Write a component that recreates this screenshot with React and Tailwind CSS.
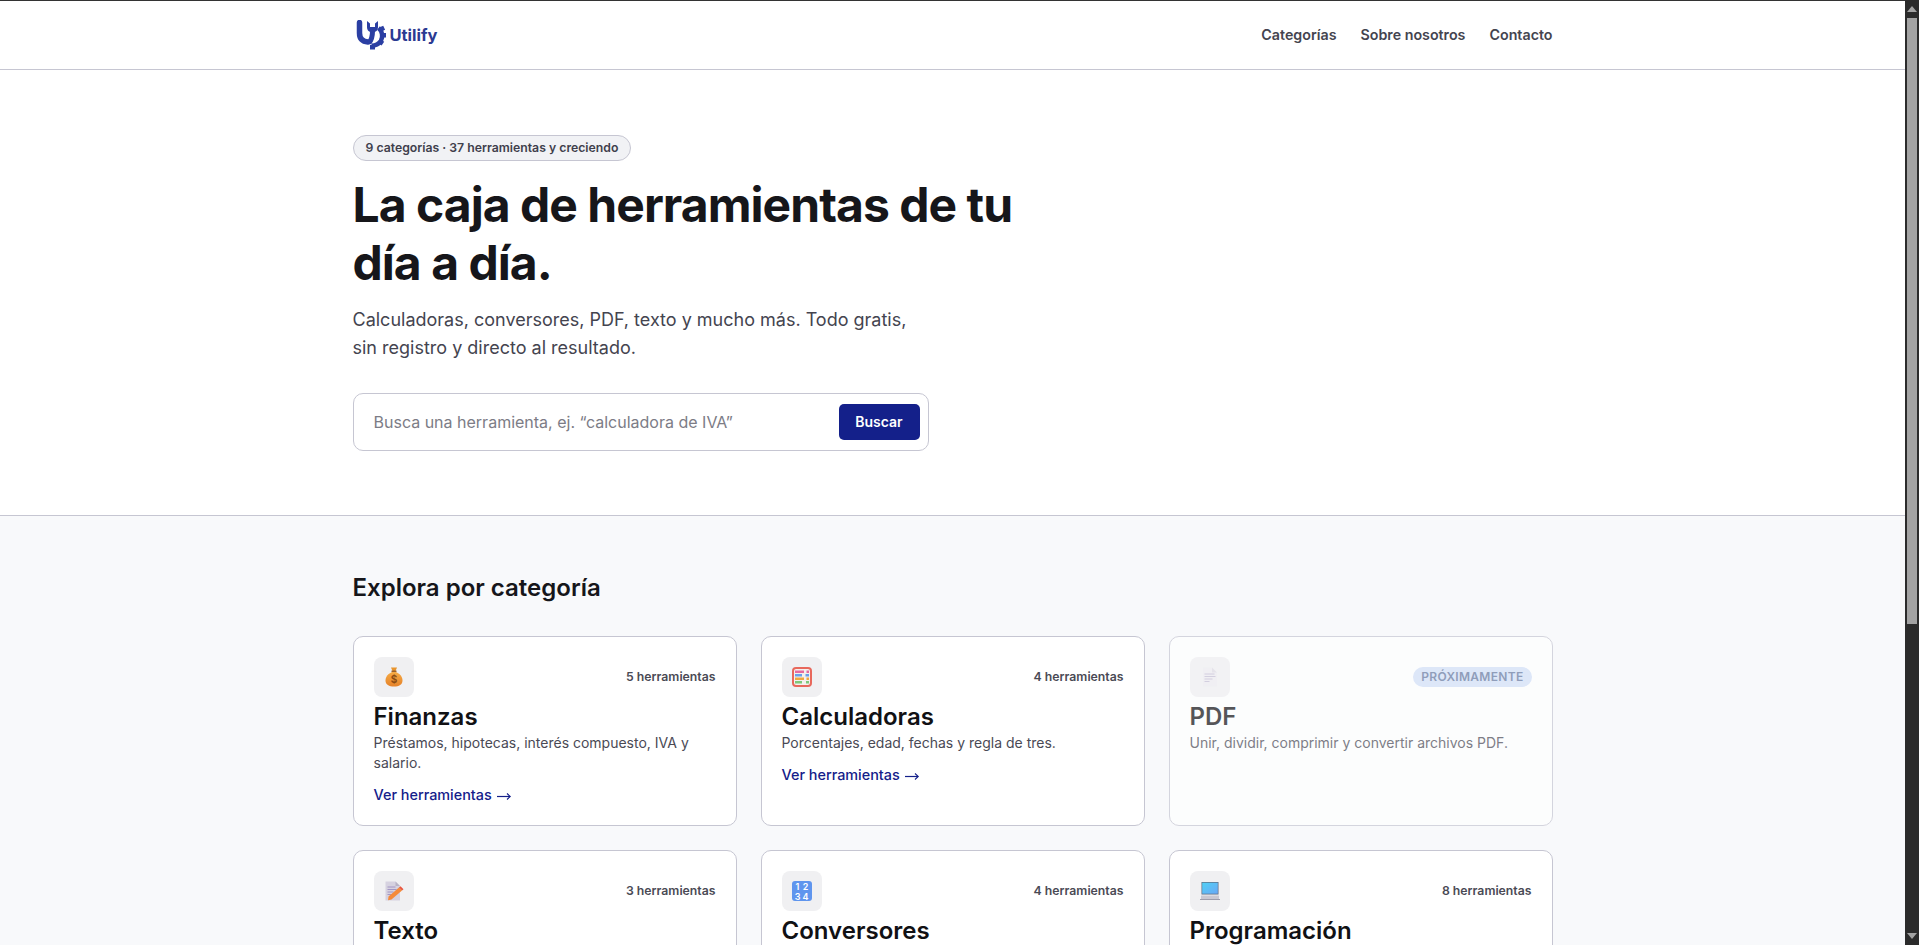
const cards = [
  { icon: 'bag', title: 'Finanzas', desc: 'Préstamos, hipotecas, interés compuesto, IVA y salario.', count: '5 herramientas' },
  { icon: 'abacus', title: 'Calculadoras', desc: 'Porcentajes, edad, fechas y regla de tres.', count: '4 herramientas' },
  { icon: 'doc', title: 'PDF', desc: 'Unir, dividir, comprimir y convertir archivos PDF.', soon: true },
  { icon: 'memo', title: 'Texto', count: '3 herramientas' },
  { icon: 'nums', title: 'Conversores', count: '4 herramientas' },
  { icon: 'laptop', title: 'Programación', count: '8 herramientas' },
]

function Logo() {
  return (
    <svg width="30" height="30" viewBox="0 0 30 30" fill="none">
      <path d="M3.5 2.5V13c0 5.500 3 8.500 8.500 9" stroke="#2b3fa3" strokeWidth="5.500" strokeLinecap="round" />
      <path d="M13 23c2.500-3 3.500-6 3.500-12" stroke="#2b3fa3" strokeWidth="5" />
      <path d="M11 1v6c0 3.200 2.200 5.500 5.500 5.500S22 10.200 22 7V1l-3 2.500v3.500h-5V3.500z" fill="#2b3fa3" />
      <path d="M22.500 8c3.800 3 4.800 9 2.300 13-2 3-5.300 4.700-9.300 4.700" stroke="#2b3fa3" strokeWidth="4.500" />
      <rect x="24" y="6.500" width="4.500" height="4.500" fill="#2b3fa3" transform="rotate(-25 26 9)" />
      <rect x="25.500" y="13" width="4.500" height="4.500" fill="#2b3fa3" />
      <rect x="23" y="20" width="4.500" height="4.500" fill="#2b3fa3" transform="rotate(35 25 22)" />
      <rect x="14" y="25" width="5" height="4.500" fill="#2b3fa3" />
    </svg>
  )
}

function Icon({ name }) {
  if (name === 'bag') {
    return (
      <svg width="20" height="20" viewBox="0 0 20 20">
        <defs>
          <linearGradient id="bagFill" x1="0" y1="0" x2="0" y2="1">
            <stop offset="0" stopColor="#f6ab45" />
            <stop offset="1" stopColor="#e5822a" />
          </linearGradient>
        </defs>
        <path d="M7 0.500h6l-1.500 3.500h-3z" fill="#e8952f" />
        <rect x="7.500" y="3.600" width="5" height="1.300" fill="#8f5118" />
        <path d="M8 5h4c3.500 1.500 6.500 4.500 6.500 8.500 0 4-3.500 6-8.500 6s-8.500-2-8.500-6c0-4 3-7 6.500-8.500z" fill="url(#bagFill)" />
        <text x="10" y="16" textAnchor="middle" fontSize="10" fontWeight="700" fill="#8a4b12" fontFamily="Inter, sans-serif">$</text>
      </svg>
    )
  }
  if (name === 'abacus') {
    return (
      <svg width="20" height="20" viewBox="0 0 20 20">
        <rect x="1" y="1" width="18" height="18" rx="3" fill="#f4f0ee" stroke="#e8685c" strokeWidth="2" />
        <rect x="3" y="3.500" width="9" height="2.500" fill="#e76aa0" />
        <rect x="14.500" y="3.500" width="2.500" height="2.500" fill="#e76aa0" />
        <rect x="3" y="7" width="7" height="2.500" fill="#6aa0ea" />
        <rect x="13.500" y="7" width="3.500" height="2.500" fill="#6aa0ea" />
        <rect x="3" y="10.500" width="9" height="2.500" fill="#f0a840" />
        <rect x="14.500" y="10.500" width="2.500" height="2.500" fill="#f0a840" />
        <rect x="3" y="14" width="7" height="2.500" fill="#7ec87a" />
        <rect x="14" y="14" width="3" height="2.500" fill="#7ec87a" />
      </svg>
    )
  }
  if (name === 'doc') {
    return (
      <svg width="20" height="20" viewBox="0 0 20 20" opacity="0.65">
        <path d="M3 0.500h9l5 5V19.500H3z" fill="#ece9f0" />
        <path d="M12 0.500l5 5h-5z" fill="#d5d1dc" />
        <path d="M4.500 7h10M4.500 9.500h11M4.500 12h8M4.500 14.500h5" stroke="#a79cc0" strokeWidth="0.900" />
      </svg>
    )
  }
  if (name === 'memo') {
    return (
      <svg width="20" height="20" viewBox="0 0 20 20">
        <path d="M1.500 0.500h10l4.500 4.500v14.500H1.500z" fill="#d6d2e0" />
        <path d="M11.500 0.500l4.500 4.500h-4.500z" fill="#b8b3c6" />
        <path d="M3.500 6h8M3.500 8.500h9M3.500 11h6M3.500 13.500h4" stroke="#9d8fc0" strokeWidth="0.900" />
        <path d="M4.500 15.500L15 6.500l3 3L7.500 18.500l-3.500 .8z" fill="#f58a3a" />
        <path d="M15 6.500l1.500-1.300 3 3-1.500 1.300z" fill="#e8553e" />
      </svg>
    )
  }
  if (name === 'nums') {
    return (
      <div className="grid h-5 w-5 grid-cols-2 place-items-center rounded-[3px] bg-[#5f95ee] px-[2px] font-['Inter',sans-serif] text-[9px] leading-[9px] font-semibold text-white">
        <span>1</span>
        <span>2</span>
        <span>3</span>
        <span>4</span>
      </div>
    )
  }
  return (
    <svg width="20" height="20" viewBox="0 0 20 20">
      <defs>
        <linearGradient id="screenFill" x1="0" y1="0" x2="1" y2="1">
          <stop offset="0" stopColor="#4fd0f5" />
          <stop offset="1" stopColor="#6aa8f5" />
        </linearGradient>
      </defs>
      <rect x="1.500" y="1" width="17" height="12.500" fill="#5d6b80" />
      <rect x="2.200" y="1.700" width="15.600" height="11" fill="url(#screenFill)" />
      <rect x="1" y="14.500" width="18" height="3.500" fill="#c9c8d2" />
      <rect x="0" y="18" width="20" height="1" fill="#9e9dab" />
    </svg>
  )
}

function Arrow() {
  return (
    <svg className="ml-[1px] inline-block align-[-1px]" width="14" height="9" viewBox="0 0 14 9" fill="none" stroke="#14208a">
      <path d="M0 4.500h13.200" strokeWidth="1.200" />
      <path d="M10 1.500l3.300 3-3.300 3" strokeWidth="1.100" />
    </svg>
  )
}

function Card({ card }) {
  return (
    <div
      className={`flex min-h-[190px] flex-col rounded-[10px] border border-[#c6c6d2] bg-white p-5 ${
        card.soon ? 'opacity-70' : ''
      }`}
    >
      <div className="flex items-center justify-between">
        <div className="grid h-10 w-10 place-items-center rounded-lg bg-[#f0f0f2]">
          <Icon name={card.icon} />
        </div>
        {card.soon ? (
          <span className="rounded-full bg-[#d2e0f8] px-2 py-0.5 text-xs font-semibold tracking-[0.3px] text-[#64779f]">
            PRÓXIMAMENTE
          </span>
        ) : (
          <span className="text-[12.25px] font-semibold text-[#4a4a55]">{card.count}</span>
        )}
      </div>
      <h3 className="mt-1 text-2xl leading-8 font-semibold text-[#111114]">{card.title}</h3>
      {card.desc && <p className="text-sm leading-5 text-[#4a4a55]">{card.desc}</p>}
      {card.desc && !card.soon && (
        <a href="#" className="mt-3 text-[14.4px] leading-5 font-medium text-[#14208a]">
          Ver herramientas <Arrow />
        </a>
      )}
    </div>
  )
}

export default function App() {
  return (
    <div className="flex h-[945px] overflow-hidden bg-white font-['Inter',sans-serif]">
      <main className="min-w-0 flex-1 overflow-hidden">
        <header className="border-t border-b border-t-[#333333] border-b-[#c6c6d2] bg-white">
          <div className="mx-auto flex h-[68px] w-[1200px] items-center justify-between">
            <div className="flex items-center gap-[4px] pl-[3px]">
              <Logo />
              <span className="text-[16.5px] font-bold text-[#2b3a92]">Utilify</span>
            </div>
            <nav className="flex gap-6 text-[14.25px] font-semibold text-[#44444f]">
              <a href="#">Categorías</a>
              <a href="#">Sobre nosotros</a>
              <a href="#">Contacto</a>
            </nav>
          </div>
        </header>

        <section className="h-[446px] border-b border-[#c6c6d2] bg-white pt-[65px]">
          <div className="mx-auto w-[1200px]">
            <div className="w-fit rounded-full border border-[#c6c6d2] bg-[#f1f2f5] px-3 py-1 text-[12.25px] leading-4 font-semibold text-[#3f3f4c]">
              9 categorías · 37 herramientas y creciendo
            </div>
            <h1 className="mt-[15px] w-[720px] text-5xl leading-[58px] font-bold tracking-[-0.96px] text-[#16161a]">
              La caja de herramientas de tu día a día.
            </h1>
            <p className="mt-[14px] w-[570px] text-lg leading-7 text-[#44444f]">
              Calculadoras, conversores, PDF, texto y mucho más. Todo gratis, sin registro y directo al resultado.
            </p>
            <form className="mt-[31px] flex h-[58px] w-[576px] items-center rounded-[10px] border border-[#c6c6d2] bg-white pr-2 pl-5">
              <input
                className="min-w-0 flex-1 bg-transparent text-base text-[#111114] outline-none placeholder:text-[#7c7c86]"
                placeholder="Busca una herramienta, ej. “calculadora de IVA”"
              />
              <button type="button" className="h-9 w-[81px] rounded-[5px] bg-[#14208a] text-sm font-semibold text-white">
                Buscar
              </button>
            </form>
          </div>
        </section>

        <section className="bg-[#f8f9fb] pt-14">
          <div className="mx-auto w-[1200px]">
            <h2 className="text-2xl leading-8 font-semibold text-[#16161a]">Explora por categoría</h2>
            <div className="mt-8 grid grid-cols-3 gap-6">
              {cards.map((card) => (
                <Card key={card.title} card={card} />
              ))}
            </div>
          </div>
        </section>
      </main>

      <aside className="flex w-[14px] shrink-0 flex-col items-center bg-[#2b2b2b]">
        <div className="mt-[6px] h-0 w-0 border-x-[5px] border-b-[6px] border-x-transparent border-b-[#a3a3a3]" />
        <div className="mt-[6px] h-[606px] w-[10px] bg-[#a3a3a3]" />
        <div className="mt-auto mb-[6px] h-0 w-0 border-x-[5px] border-t-[6px] border-x-transparent border-t-[#a3a3a3]" />
      </aside>
    </div>
  )
}
